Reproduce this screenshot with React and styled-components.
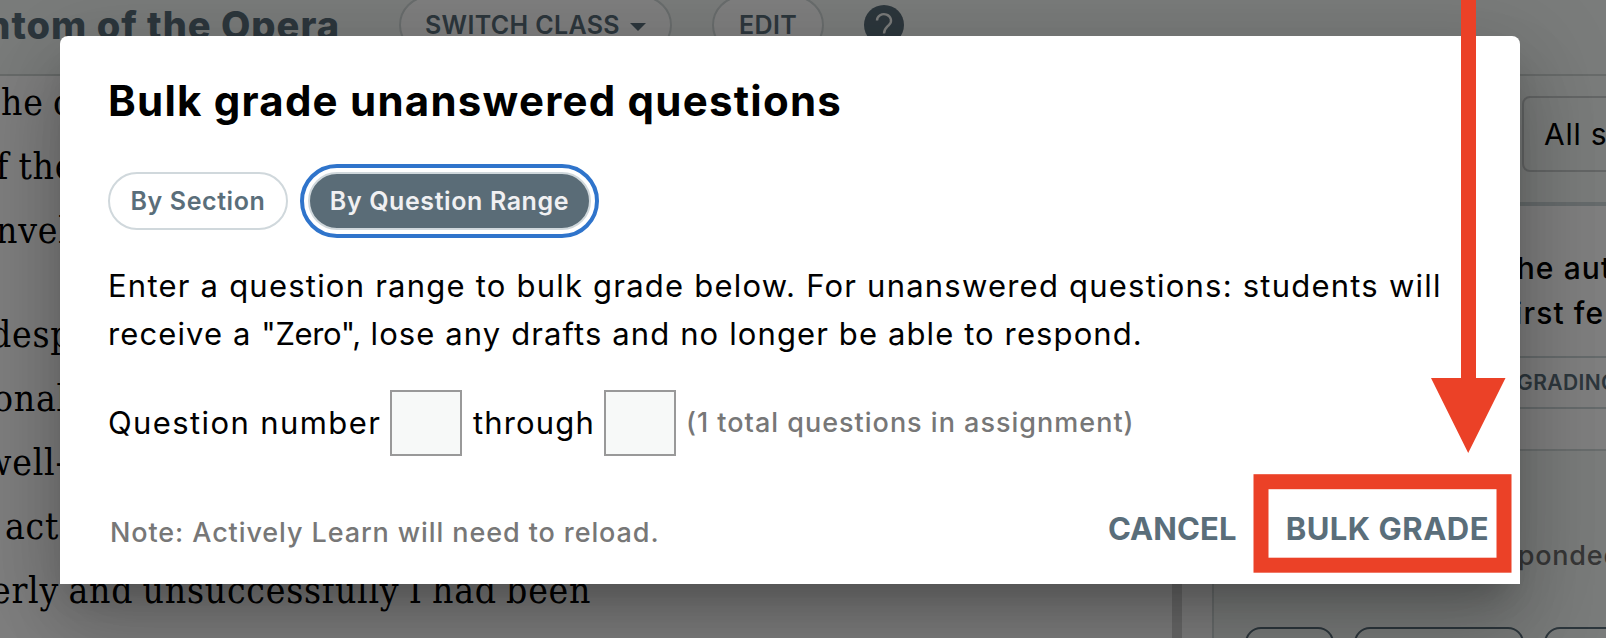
import { useState } from "react"
import styled, { createGlobalStyle } from "styled-components"

const GlobalStyle = createGlobalStyle`
  * {
    box-sizing: border-box;
  }

  body {
    margin: 0;
    overflow: hidden;
    font-family: Inter, "Liberation Sans", sans-serif;
    color: #000;
  }
`

const Page = styled.div`
  position: relative;
  display: flex;
  flex-direction: column;
  width: 1606px;
  height: 638px;
  overflow: hidden;
  background: #fff;
`

const Header = styled.header`
  flex: none;
  height: 76px;
  background: #f5f8f6;
  border-bottom: 2px solid #d0d6d5;
`

const HeaderRow = styled.div`
  display: flex;
  align-items: center;
  height: 58px;
  margin-top: -4px;
`

const BookTitle = styled.div`
  display: flex;
  justify-content: flex-end;
  flex: none;
  width: 340px;
  margin-right: 59px;
  overflow: hidden;
  white-space: nowrap;
  font-size: 38px;
  font-weight: 800;
  letter-spacing: 1px;
  line-height: 54px;
  color: #5a6e7a;
`

const HeaderButton = styled.button`
  display: flex;
  align-items: center;
  justify-content: center;
  gap: 10px;
  width: ${p => p.$width}px;
  height: 58px;
  margin-right: 40px;
  padding: 0;
  border: 2px solid #d3dada;
  border-radius: 29px;
  background: #fff;
  color: #5a6e7a;
  font-family: inherit;
  font-size: 25px;
  font-weight: 600;
  letter-spacing: 0.35px;
`

const Body = styled.div`
  display: flex;
  flex: 1;
  min-height: 0;
`

const Reader = styled.div`
  width: 1172px;
  overflow: hidden;
  font-family: "DejaVu Serif Condensed", "DejaVu Serif", serif;
  font-size: 37px;
  white-space: nowrap;
`

const Passage = styled.div`
  margin: -5px 0 45px;
`

const Line = styled.div`
  margin-left: ${p => p.$indent || 0}px;
  line-height: 64px;
  letter-spacing: 0.75px;
  word-spacing: -2px;
`

const Splitter = styled.div`
  width: 10px;
  margin-right: 30px;
  background: #d4d4d4;
`

const Panel = styled.aside`
  display: flex;
  flex-direction: column;
  flex: 1;
  min-width: 0;
  overflow: hidden;
  white-space: nowrap;
  border-left: 2px solid #d3dada;
  background: #f5f8f6;
`

const Filters = styled.div`
  flex: none;
  height: 130px;
  padding: 20px 0 0 308px;
  border-bottom: 4px solid #cdd6d8;
`

const Select = styled.div`
  width: 300px;
  height: 76px;
  padding-left: 20px;
  border: 2px solid #c8cccc;
  border-radius: 8px;
  font-size: 30px;
  letter-spacing: 0.8px;
  line-height: 73px;
`

const Question = styled.div`
  flex: none;
  height: 152px;
  padding: 40px 0 0 282px;
  border-bottom: 2px solid #cdd6d8;
  background: #fff;
  font-size: 30px;
  font-weight: 500;
  letter-spacing: 1.1px;
  line-height: 45px;
`

const GradingRow = styled.div`
  flex: none;
  height: 51px;
  padding-left: 303px;
  border-bottom: 2px solid #cdd6d8;
  background: #fff;
  color: #5a6e7a;
  font-size: 21px;
  font-weight: 600;
  letter-spacing: 0.4px;
  line-height: 49px;
`

const Spacer = styled.div`
  flex: none;
  height: 42px;
  border-bottom: 2px solid #d3dada;
  background: #fff;
`

const Responded = styled.div`
  padding: 87px 0 54px 261px;
  color: #6f6f6f;
  font-size: 27px;
  font-weight: 500;
  letter-spacing: 0.8px;
  line-height: 35px;
`

const Chips = styled.div`
  display: flex;
  gap: 20px;
  padding-left: 31px;
`

const Chip = styled.div`
  flex: none;
  width: ${p => p.$width}px;
  height: 58px;
  border: 2px solid #5a6e7a;
  border-radius: 16px;
`

const Overlay = styled.div`
  position: absolute;
  inset: 0;
  padding: 36px 0 0 60px;
  background: rgba(0, 0, 0, 0.5);
`

const Modal = styled.section`
  width: 1460px;
  height: 548px;
  padding: 42px 31px 0 48px;
  border-radius: 8px 8px 0 0;
  background: #fff;
  box-shadow: 0 22px 30px -14px rgba(0, 0, 0, 0.2),
    0 48px 76px 6px rgba(0, 0, 0, 0.14), 0 18px 92px 16px rgba(0, 0, 0, 0.12);
`

const Title = styled.h2`
  margin: 0;
  font-size: 42px;
  font-weight: 700;
  letter-spacing: 1.23px;
  line-height: 45px;
  white-space: nowrap;
`

const Tabs = styled.div`
  display: flex;
  gap: 20px;
  margin-top: 49px;
`

const Tab = styled.button`
  width: ${p => p.$width}px;
  height: 58px;
  padding: 0;
  border: 2px solid #d0d8dc;
  border-radius: 29px;
  background: ${p => (p.$active ? "#5a6c77" : "#fff")};
  color: ${p => (p.$active ? "#f0f0f2" : "#5a6e7a")};
  outline: ${p => (p.$active ? "4px solid #2f74cb" : "none")};
  outline-offset: 4px;
  font-family: inherit;
  font-size: 25px;
  font-weight: 600;
  letter-spacing: 0.6px;
  white-space: nowrap;
`

const Text = styled.p`
  margin: 32px 0;
  font-size: 31px;
  line-height: 48px;
  white-space: nowrap;
`

const TextLine = styled.span`
  display: block;
  letter-spacing: ${p => p.$spacing}px;
`

const Quoted = styled.span`
  letter-spacing: -0.4px;
`

const RangeRow = styled.div`
  display: flex;
  align-items: center;
  height: 66px;
  white-space: nowrap;
`

const Label = styled.label`
  width: ${p => p.$width}px;
  padding: 0 0 2px ${p => p.$pad || 0}px;
  font-size: 31px;
  letter-spacing: ${p => p.$spacing}px;
`

const NumberInput = styled.input`
  width: 72px;
  height: 66px;
  padding: 0 8px;
  border: 2px solid #999;
  border-radius: 0;
  background: #f7f9f8;
  font-size: 28px;
`

const Hint = styled.span`
  margin-left: 10px;
  padding-bottom: 2px;
  color: #777;
  font-size: 27px;
  font-weight: 500;
  letter-spacing: 1px;
`

const Footer = styled.footer`
  display: flex;
  align-items: center;
  height: 61px;
  margin-top: 42px;
  white-space: nowrap;
`

const Note = styled.span`
  flex: 1;
  padding: 8px 0 0 2px;
  color: #777;
  font-size: 27px;
  font-weight: 500;
  letter-spacing: 0.9px;
`

const Action = styled.button`
  margin-left: ${p => p.$gap || 0}px;
  padding: 0;
  border: 0;
  background: none;
  color: #5a6e7a;
  font-family: inherit;
  font-size: 31px;
  font-weight: 650;
  letter-spacing: ${p => p.$spacing}px;
`

const Annotation = styled.svg`
  position: absolute;
  top: 0;
  left: 1253px;
  pointer-events: none;
`

const firstLines = [["he c", 1], ["f the", -4], ["nvel", -4]]
const secondLines = [
  ["desp", -10],
  ["onal", -7],
  ["well-", -17],
  ["act", 5],
  ["erly and unsuccessfully I had been", -9],
]

const App = () => {
  const [mode, setMode] = useState("range")
  const [from, setFrom] = useState("")
  const [to, setTo] = useState("")

  return (
    <Page>
      <GlobalStyle />
      <Header>
        <HeaderRow>
          <BookTitle>Phantom of the Opera</BookTitle>
          <HeaderButton $width={273}>
            SWITCH CLASS
            <svg width="16" height="12" viewBox="0 0 16 12">
              <path d="M0 4h16L8 12z" fill="#5a6e7a" />
            </svg>
          </HeaderButton>
          <HeaderButton $width={112}>EDIT</HeaderButton>
          <svg width="40" height="40" viewBox="0 0 40 40">
            <circle cx="20" cy="20" r="20" fill="#5a6e7a" />
            <path
              d="M13 15.5a7 6.3 0 1 1 12.2 4.2c-2.4 2.6-5.2 4-5.2 8.8"
              fill="none"
              stroke="#f6f8f7"
              strokeWidth="2.4"
            />
            <circle cx="20" cy="32.5" r="1.8" fill="#f6f8f7" />
          </svg>
        </HeaderRow>
      </Header>
      <Body>
        <Reader>
          <Passage>
            {firstLines.map(([text, indent]) => <Line key={text} $indent={indent}>{text}</Line>)}
          </Passage>
          <Passage>
            {secondLines.map(([text, indent]) => <Line key={text} $indent={indent}>{text}</Line>)}
          </Passage>
        </Reader>
        <Splitter />
        <Panel>
          <Filters>
            <Select>All students</Select>
          </Filters>
          <Question>
            The author
            <br />
            First fe
          </Question>
          <GradingRow>GRADING</GradingRow>
          <Spacer />
          <Responded>responded</Responded>
          <Chips>
            <Chip $width={89} />
            <Chip $width={170} />
            <Chip $width={170} />
          </Chips>
        </Panel>
      </Body>

      <Overlay>
        <Modal>
          <Title>Bulk grade unanswered questions</Title>
          <Tabs>
            <Tab $width={180} $active={mode === "section"} onClick={() => setMode("section")}>
              By Section
            </Tab>
            <Tab $width={283} $active={mode === "range"} onClick={() => setMode("range")}>
              By Question Range
            </Tab>
          </Tabs>
          <Text>
            <TextLine $spacing={1.22}>
              Enter a question range to bulk grade below. For unanswered questions: students will
            </TextLine>
            <TextLine $spacing={1.11}>
              receive a <Quoted>"Zero",</Quoted> lose any drafts and no longer be able to respond.
            </TextLine>
          </Text>
          <RangeRow>
            <Label $width={282} $spacing={1.4}>Question number</Label>
            <NumberInput value={from} onChange={e => setFrom(e.target.value)} />
            <Label $width={142} $pad={11} $spacing={1.15}>through</Label>
            <NumberInput value={to} onChange={e => setTo(e.target.value)} />
            <Hint>(1 total questions in assignment)</Hint>
          </RangeRow>
          <Footer>
            <Note>Note: Actively Learn will need to reload.</Note>
            <Action $spacing={0.1}>CANCEL</Action>
            <Action $spacing={0.5} $gap={49}>BULK GRADE</Action>
          </Footer>
        </Modal>
      </Overlay>

      <Annotation width="260" height="580" viewBox="0 0 260 580">
        <path d="M208 0h15v378h29.5L215.2 453 178 378h30z" fill="#eb4127" />
        <rect x="8" y="481.7" width="243" height="83.5" fill="none" stroke="#eb4127" strokeWidth="15" />
      </Annotation>
    </Page>
  )
}

export default App
